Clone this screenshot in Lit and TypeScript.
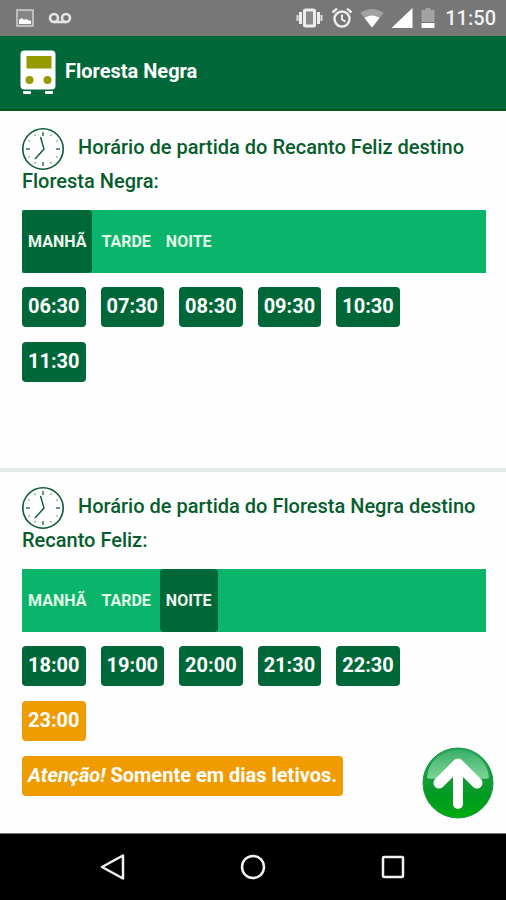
import { LitElement, html, css, svg } from "lit";
import { customElement, property } from "lit/decorators.js";
import { classMap } from "lit/directives/class-map.js";

type Period = "MANHÃ" | "TARDE" | "NOITE";
interface Departure {
  time: string;
  schoolDays?: boolean;
}

const PERIODS: Period[] = ["MANHÃ", "TARDE", "NOITE"];

const FROM_RECANTO: Partial<Record<Period, Departure[]>> = {
  MANHÃ: ["06:30", "07:30", "08:30", "09:30", "10:30", "11:30"].map((time) => ({ time })),
};

const FROM_FLORESTA: Partial<Record<Period, Departure[]>> = {
  NOITE: [
    ...["18:00", "19:00", "20:00", "21:30", "22:30"].map((time) => ({ time })),
    { time: "23:00", schoolDays: true },
  ],
};

@customElement("status-bar")
export class StatusBar extends LitElement {
  static styles = css`
    :host {
      display: flex;
      align-items: center;
      justify-content: space-between;
      height: 36px;
      padding: 0 10px 0 16px;
      background: #777777;
      color: #f2f2f2;
      font-size: 20px;
      font-weight: 500;
    }
    .group {
      display: flex;
      align-items: center;
      gap: 7px;
    }
    .left {
      gap: 14px;
    }
    svg {
      display: block;
    }
  `;

  render() {
    return html`
      <div class="group left">
        <svg width="18" height="18" viewBox="0 0 18 18" aria-hidden="true">
          <rect x="1" y="1" width="16" height="16" fill="#858585" stroke="#d2d2d2" stroke-width="1.5" />
          <path d="M3 15v-4l3-2 2 2 2-1 2 1 3 1v3z" fill="#fff" />
        </svg>
        <svg width="24" height="12" viewBox="0 0 24 12" fill="none" stroke="#e4e4e4" stroke-width="2.6" aria-hidden="true">
          <circle cx="6" cy="6" r="4" />
          <circle cx="18" cy="6" r="4" />
          <path d="M6 10h12" />
        </svg>
      </div>
      <div class="group">
        <svg width="28" height="20" viewBox="0 0 28 20" aria-hidden="true">
          <rect x="8.5" y="2" width="10" height="16" rx="1" fill="#8a8a8a" stroke="#eee" stroke-width="3" />
          <path d="M4.5 4v12M22.5 4v12" stroke="#eee" stroke-width="3" />
          <path d="M1.5 7v6M25.5 7v6" stroke="#ddd" stroke-width="2" />
        </svg>
        <svg width="22" height="22" viewBox="0 0 22 22" fill="none" stroke="#eee" stroke-width="2.4" aria-hidden="true">
          <circle cx="11" cy="12" r="7.5" />
          <path d="M11 7.5v5l3.5 2.2" stroke-width="2" />
          <path d="M1.5 5.5l4.5-3.8M20.5 5.5l-4.5-3.8" />
        </svg>
        <svg width="24" height="20" viewBox="0 0 24 20" aria-hidden="true">
          <path d="M12 19.5L0.5 5C7 -0.5 17 -0.5 23.5 5z" fill="#a2a2a2" />
          <path d="M12 19.5L4.5 10C9 6.5 15 6.5 19.5 10z" fill="#fff" />
        </svg>
        <svg width="22" height="20" viewBox="0 0 22 20" aria-hidden="true">
          <path d="M0.5 20L21.5 0v20z" fill="#fff" />
        </svg>
        <svg width="18" height="22" viewBox="0 0 18 22" aria-hidden="true">
          <path d="M5.5 1h5v2h4v12h-13v-12h4z" fill="#a2a2a2" />
          <path d="M1.5 16h13v5h-13z" fill="#fff" />
        </svg>
        <span>11:50</span>
      </div>
    `;
  }
}

@customElement("bus-line")
export class BusLine extends LitElement {
  static styles = css`
    :host {
      display: block;
      padding: 17px 20px 0 22px;
    }
    .title {
      margin: 0 0 12px;
      color: #065d2c;
      font-size: 20px;
      font-weight: 500;
      line-height: 34px;
    }
    .clock {
      width: 42px;
      height: 42px;
      margin: -8px 14px -8px 0;
      vertical-align: middle;
    }
    .tabs {
      display: flex;
      gap: 3px;
      height: 63px;
      background: #0ab56b;
    }
    .tab {
      padding: 0 6px;
      border: 0;
      border-radius: 4px;
      background: transparent;
      color: #e2f9e9;
      font: inherit;
      font-size: 16px;
      font-weight: 700;
      cursor: pointer;
    }
    .tab.active {
      background: #006838;
      color: #eef8f0;
    }
    .times {
      display: flex;
      flex-wrap: wrap;
      gap: 15px;
      margin: 14px 0 0;
      padding: 0 20px 0 0;
      list-style: none;
    }
    .chip {
      padding: 0 6px 2px;
      border-radius: 4px;
      background: #006838;
      color: #fff;
      font-size: 20px;
      font-weight: 700;
      line-height: 38px;
    }
    .chip.warn {
      background: #f09c00;
    }
    .note {
      width: fit-content;
      margin: 15px 0 0;
    }
  `;

  @property() from = "";
  @property() to = "";
  @property({ attribute: false }) schedule: Partial<Record<Period, Departure[]>> = {};
  @property() period: Period = "MANHÃ";

  private clock() {
    const ticks = Array.from({ length: 12 }, (_, i) => {
      const major = i % 3 === 0;
      return svg`<path d=${major ? "M21 4v4" : "M21 4v2"} opacity=${major ? "0.9" : "0.5"}
        transform="rotate(${i * 30} 21 21)" />`;
    });
    return html`<svg class="clock" viewBox="0 0 42 42" fill="none" stroke="#0b5a34" stroke-width="1.4" aria-hidden="true">
      <circle cx="21" cy="21" r="20.2" stroke-width="1.6" />
      ${ticks}
      <path d="M18.5 9L22 21L13 31" />
    </svg>`;
  }

  render() {
    const list = this.schedule[this.period] ?? [];
    return html`
      <h2 class="title">${this.clock()}Horário de partida do ${this.from} destino ${this.to}:</h2>
      <div class="tabs" role="tablist">
        ${PERIODS.map(
          (p) => html`<button
            class=${classMap({ tab: true, active: p === this.period })}
            role="tab"
            aria-selected=${p === this.period ? "true" : "false"}
            @click=${() => (this.period = p)}
          >${p}</button>`
        )}
      </div>
      <ul class="times">
        ${list.map((d) => html`<li class=${classMap({ chip: true, warn: !!d.schoolDays })}>${d.time}</li>`)}
      </ul>
      ${list.some((d) => d.schoolDays)
        ? html`<p class="chip warn note"><em>Atenção!</em> Somente em dias letivos.</p>`
        : ""}
    `;
  }
}

@customElement("app-root")
export class AppRoot extends LitElement {
  static styles = css`
    :host {
      display: flex;
      flex-direction: column;
      min-height: 100vh;
      background: #fefefe;
      font-family: Roboto, "Liberation Sans", sans-serif;
    }
    .header {
      display: flex;
      align-items: center;
      gap: 9px;
      box-sizing: border-box;
      height: 75px;
      padding: 0 20px 2px;
      border-bottom: 2px solid #07591f;
      background: #006838;
      color: #fff;
    }
    .name {
      margin: 0;
      padding-bottom: 2px;
      font-size: 20px;
      font-weight: 700;
    }
    .content {
      position: relative;
      flex: 1;
      padding-top: 2px;
    }
    .first {
      min-height: 338px;
      border-bottom: 4px solid #e3ebe9;
    }
    .second {
      padding-bottom: 36px;
    }
    .top {
      position: absolute;
      right: 12px;
      bottom: 14px;
      width: 72px;
      height: 72px;
      padding: 0;
      border: 0;
      background: none;
      cursor: pointer;
    }
    .nav {
      display: flex;
      align-items: center;
      justify-content: center;
      gap: 112px;
      height: 66px;
      border-top: 1px solid #777;
      background: #000;
    }
    .key {
      width: 28px;
      height: 28px;
      padding: 0;
      border: 0;
      background: none;
      cursor: pointer;
    }
    svg {
      display: block;
    }
  `;

  private navKey(label: string, shape: unknown) {
    return html`<button class="key" aria-label=${label}>
      <svg width="28" height="28" viewBox="0 0 28 28" fill="none" stroke="#f2f2f2" stroke-width="2.5">${shape}</svg>
    </button>`;
  }

  render() {
    return html`
      <status-bar></status-bar>
      <header class="header">
        <svg width="36" height="44" viewBox="0 0 36 44" aria-hidden="true">
          <rect x="0.5" y="0.5" width="35" height="39" rx="4" fill="#fff" />
          <rect x="6.5" y="6" width="25" height="12.5" fill="#949a00" />
          <circle cx="9.5" cy="30" r="4" fill="#949a00" />
          <circle cx="27.5" cy="30" r="4" fill="#949a00" />
          <rect x="3" y="41" width="8" height="3" rx="1" fill="#fff" />
          <rect x="25" y="41" width="8" height="3" rx="1" fill="#fff" />
        </svg>
        <h1 class="name">Floresta Negra</h1>
      </header>
      <main class="content">
        <bus-line class="first" from="Recanto Feliz" to="Floresta Negra" period="MANHÃ" .schedule=${FROM_RECANTO}></bus-line>
        <bus-line class="second" from="Floresta Negra" to="Recanto Feliz" period="NOITE" .schedule=${FROM_FLORESTA}></bus-line>
        <button class="top" aria-label="Voltar ao topo" @click=${() => window.scrollTo(0, 0)}>
          <svg width="72" height="72" viewBox="0 0 72 72">
            <defs>
              <linearGradient id="ball" x1="0" y1="0" x2="0" y2="1">
                <stop offset="0" stop-color="#20a85a" />
                <stop offset="0.45" stop-color="#159a38" />
                <stop offset="0.7" stop-color="#009b1e" />
                <stop offset="1" stop-color="#00ac10" />
              </linearGradient>
              <linearGradient id="gloss" x1="0" y1="0" x2="0" y2="1">
                <stop offset="0" stop-color="#fff" stop-opacity="0.1" />
                <stop offset="1" stop-color="#b9ffd0" stop-opacity="0.6" />
              </linearGradient>
            </defs>
            <circle cx="36" cy="36" r="35" fill="url(#ball)" stroke="#179544" stroke-width="1" />
            <path d="M5 31C6 14 20 3 36 3S66 14 67 31C56 34 50 28 36 28S16 34 5 31z" fill="url(#gloss)" />
            <g fill="none" stroke="#fff" stroke-linecap="round" stroke-linejoin="round">
              <path d="M36 57V20" stroke-width="10" />
              <path d="M17 36L36 17L55 36" stroke-width="11" />
            </g>
          </svg>
        </button>
      </main>
      <nav class="nav">
        ${this.navKey("Voltar", svg`<path d="M3 14L24 2.5V25.5z" stroke-linejoin="round" />`)}
        ${this.navKey("Início", svg`<circle cx="14" cy="14" r="11" />`)}
        ${this.navKey("Recentes", svg`<rect x="4" y="4" width="20" height="20" rx="1" />`)}
      </nav>
    `;
  }
}
